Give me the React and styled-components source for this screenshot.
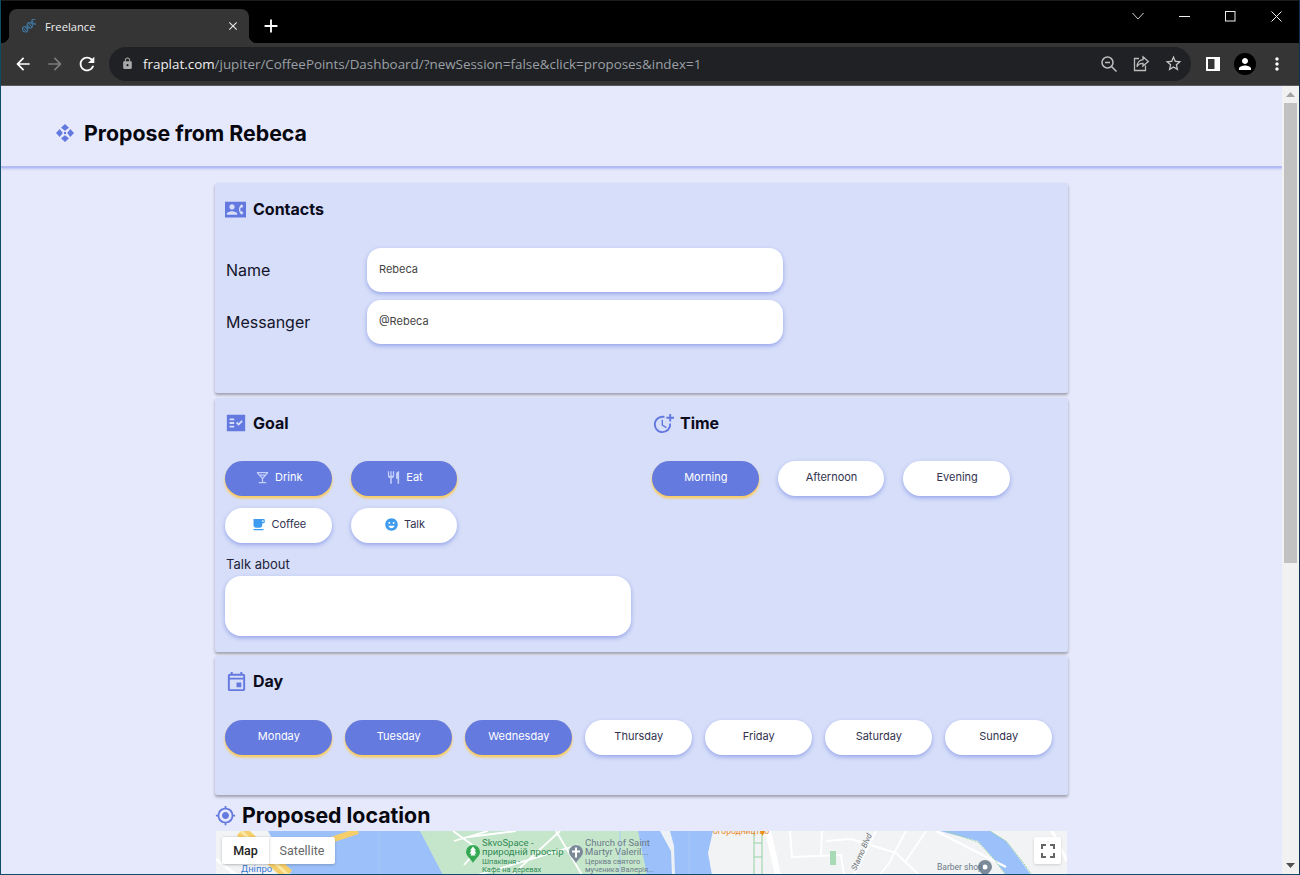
import React from "react";
import styled, { createGlobalStyle } from "styled-components";
import {
  MdOutlineMoreTime, MdOutlineEvent, MdOutlineLocalBar,
  MdRestaurant, MdLocalCafe, MdEmojiEmotions, MdGpsFixed,
  MdArrowBack, MdArrowForward, MdRefresh, MdLock, MdStarBorder, MdPerson, MdMoreVert, MdClose, MdAdd,
} from "react-icons/md";

const Global = createGlobalStyle`
  html, body { margin: 0; padding: 0; height: 875px; overflow: hidden; }
  * { box-sizing: border-box; }
  body { font-family: Inter, "Noto Sans", sans-serif; background: #000; }
`;

const Win = styled.div`
  width: 1300px; height: 875px; display: flex; flex-direction: column; overflow: hidden;
  border-left: 1px solid #0f4a66; border-right: 1px solid #12304f; border-bottom: 1px solid #0f4a66;
  background: #e6e9fb;
`;
const TabStrip = styled.div`
  height: 43px; background: #000; display: flex; align-items: flex-end; padding-left: 8px; flex: none;
  border-top: 1px solid #1c1c1c; position: relative;
`;
const Tab = styled.div`
  width: 240px; height: 34px; background: #353535; border-radius: 8px 8px 0 0; display: flex; align-items: center;
  padding: 0 9px 0 13px; position: relative; color: #f0f0f0;
  font: 11.2px "Open Sans", "Noto Sans", sans-serif;
  &::before, &::after { content: ""; position: absolute; bottom: 0; width: 8px; height: 8px; }
  &::before { left: -8px; background: radial-gradient(circle at 0 0, transparent 8px, #353535 8.5px); }
  &::after { right: -8px; background: radial-gradient(circle at 100% 0, transparent 8px, #353535 8.5px); }
`;
const TabTitle = styled.span` margin-left: 9px; flex: 1; `;
const NewTab = styled.div` width: 32px; height: 34px; margin-left: 6px; display: flex; align-items: center; justify-content: center; color: #fff; `;
const WinControls = styled.div` margin-left: auto; align-self: flex-start; display: flex; `;
const WinBtn = styled.div` width: 46px; height: 30px; display: flex; align-items: center; justify-content: center; color: #e6e6e6; `;

const Toolbar = styled.div`
  height: 43px; flex: none; background: #353535; border-bottom: 1px solid #5a5a5a; display: flex; align-items: center; padding: 0 6px 1px;
`;
const ToolBtn = styled.div`
  width: 32px; height: 32px; display: flex; align-items: center; justify-content: center; flex: none;
  color: ${p => p.$dim ? "#7c7c7c" : "#fff"};
`;
const Address = styled.div`
  width: 1082px; height: 34px; margin: 0 6px; border-radius: 17px; background: #202124; display: flex; align-items: center;
  padding: 0 2px 0 11px; flex: none;
`;
const LockBox = styled.div` width: 14px; color: #a8a8a8; display: flex; justify-content: center; margin-right: 9px; `;
const Url = styled.div` flex: 1; font: 13.4px "Open Sans", "Noto Sans", sans-serif; color: #9aa0a6; white-space: nowrap; `;
const Host = styled.span` color: #f0f0f0; `;
const AddrBtn = styled.div` width: 32px; height: 32px; color: #c4c7c5; display: flex; align-items: center; justify-content: center; `;
const Avatar = styled.div` width: 22px; height: 22px; border-radius: 50%; background: #000; color: #fff; display: flex; align-items: center; justify-content: center; `;

const Viewport = styled.div` flex: 1; min-height: 0; display: flex; `;
const Main = styled.main` flex: 1; min-width: 0; overflow: hidden; background: #e6e9fb; `;
const Header = styled.header`
  height: 82px; display: flex; align-items: center; gap: 9px; padding: 14px 0 0 54px;
  border-bottom: 2px solid #b3bcf3; box-shadow: 0 1px 2px rgba(150,165,235,.6);
`;
const PageTitle = styled.h1` margin: 0; font-size: 21.3px; line-height: 26px; font-weight: 700; color: #07070f; `;
const Stack = styled.div` width: 853px; margin: 15px auto 0; display: flex; flex-direction: column; `;
const Card = styled.section`
  background: #d6def9; border-radius: 2px; box-shadow: 0 2px 3px rgba(0,0,0,.32); padding: ${p => p.$pt}px 10px 0;
  height: ${p => p.$h}px; margin-top: ${p => p.$mt || 0}px;
`;
const TitleRow = styled.div` height: 24px; display: flex; align-items: center; gap: 5px; margin-left: -1px; color: #6479df; `;
const IconSlot = styled.span` width: 24px; display: flex; align-items: center; justify-content: center; flex: none; `;
const CardTitle = styled.h2` margin: 0; font-size: 16px; line-height: 24px; font-weight: 700; color: #0b0b1c; `;
const Fields = styled.div` margin-top: 27px; display: flex; flex-direction: column; gap: 8px; `;
const Row = styled.div` display: flex; align-items: center; `;
const FieldLabel = styled.label` width: 142px; padding-left: 1px; font-size: 16px; color: #14142a; `;
const Input = styled.input`
  width: 416px; height: 44px; border: 0; outline: 0; background: #fff; border-radius: 14px; padding: 0 12px 2px;
  font: 11px Inter, sans-serif; color: #444; box-shadow: 0 2px 4px rgba(100,120,222,.55);
`;
const Columns = styled.div` display: grid; grid-template-columns: 406px 406px; column-gap: 21px; `;
const Chips = styled.div`
  display: flex; flex-wrap: wrap; gap: 12px ${p => p.$gap}px; margin-top: ${p => p.$mt}px;
  max-width: ${p => p.$max ? `${p.$max}px` : "none"};
`;
const Chip = styled.button`
  width: 106.67px; height: 35px; border: 0; border-radius: 18px; display: flex; align-items: center; justify-content: center; gap: 5px;
  padding: 0 0 3px 1px; font: 11px Inter, sans-serif;
  background: ${p => p.$on ? "#647adf" : "#fff"};
  color: ${p => p.$on ? "#fff" : "#33334f"};
  box-shadow: ${p => p.$on ? "0 2px 2px .5px #f9cd68" : "0 2px 4px rgba(100,120,222,.55)"};
  svg { color: ${p => p.$on ? "#c3d0fb" : "#3f9bef"}; flex: none; }
`;
const SmallLabel = styled.div` margin-top: 13px; font-size: 13px; line-height: 16px; color: #23233a; padding-left: 1px; `;
const TextArea = styled.div`
  margin-top: 4px; height: 60px; background: #fff; border-radius: 16px; box-shadow: 0 2px 4px rgba(100,120,222,.55);
`;
const MapSection = styled.div` width: 851px; margin: 7px auto 0; `;
const MapHead = styled.div` height: 26px; display: flex; align-items: center; gap: 6px; color: #6479df; margin-left: -1px; `;
const MapTitle = styled.h2` margin: 0; font-size: 21.3px; line-height: 26px; font-weight: 700; color: #07070f; `;
const MapBox = styled.div` position: relative; height: 300px; margin-top: 3px; background: #9cc0f9; `;
const MapType = styled.div`
  position: absolute; left: 6px; top: 6px; height: 27px; width: 113px; display: flex; background: #fff; border-radius: 2px;
  box-shadow: 0 1px 3px rgba(0,0,0,.2); font: 12.5px Roboto, sans-serif;
`;
const MapTab = styled.div`
  display: flex; align-items: center; justify-content: center; width: ${p => p.$w}px;
  color: ${p => p.$on ? "#222" : "#666"}; font-weight: ${p => p.$on ? 500 : 400};
  box-shadow: ${p => p.$on ? "1px 0 2px rgba(0,0,0,.12)" : "none"};
`;
const FullBtn = styled.div`
  position: absolute; right: 6px; top: 6px; width: 27px; height: 27px; background: #fff; border-radius: 2px;
  display: flex; align-items: center; justify-content: center; box-shadow: 0 1px 3px rgba(0,0,0,.15);
`;
const MapSvg = styled.svg` display: block; `;
const ScrollBar = styled.div`
  width: 17px; flex: none; background: #f1f1f1; display: flex; flex-direction: column; align-items: center;
`;
const ArrowBox = styled.div` height: 17px; display: flex; align-items: center; justify-content: center; flex: none; `;
const Thumb = styled.div` width: 13px; height: 460px; background: #c1c1c1; flex: none; `;
const Spacer = styled.div` flex: 1; `;
const ContactsSvg = styled.svg` margin-left: -1px; `;

const Favicon = () => (
  <svg width="14" height="14" viewBox="0 0 14 14" fill="none" stroke="#3f78a3">
    <g transform="rotate(-40 7 7)">
      <path d="M-1 7C1 3 3 3 5 7S9 11 11 7 14 4 16 6" strokeWidth="1.1" />
      <path d="M-1 7C1 11 3 11 5 7S9 3 11 7 14 10 16 8" strokeWidth="1.1" />
      <path d="M1.500 4.500v5M3.500 4.500v5M6.500 4.500v5M8.500 4.500v5M12.500 5v4" strokeWidth=".9" />
    </g>
  </svg>
);

const ZoomOutIcon = () => (
  <svg width="18" height="18" viewBox="0 0 18 18" fill="none" stroke="#bdbdbd" strokeWidth="1.500">
    <circle cx="7.500" cy="7.500" r="5.500" />
    <path d="M11.500 11.500L16.500 16.500M5 7.500h5" />
  </svg>
);

const ShareIcon = () => (
  <svg width="18" height="18" viewBox="0 0 18 18" fill="none" stroke="#bdbdbd" strokeWidth="1.300">
    <path d="M7 3.500H2.500v12h11v-5" />
    <path d="M11 1.800L16.300 6.400 11 11V8.300C8 8.200 6 9.500 5 11.800 5 8 7.400 5 11 4.600Z" />
  </svg>
);

const SidePanel = () => (
  <svg width="14" height="14" viewBox="0 0 14 14">
    <path fill="#fff" fillRule="evenodd" d="M0 0h14v14H0zM2 2v10h6.500V2z" />
  </svg>
);

const ControlIcon = () => (
  <svg width="20" height="20" viewBox="0 0 20 20" fill="#6479df">
    <path d="M10 1l4 3.700L10 7.800 6 4.700zM10 19l4-3.700-4-3.100-4 3.100zM1 10l3.700-4 3.100 4-3.100 4zM19 10l-3.700-4-3.100 4 3.100 4z" />
    <circle cx="10" cy="10" r="1.200" />
  </svg>
);

const ContactsIcon = () => (
  <ContactsSvg width="21" height="21" viewBox="0 0 24 24" fill="currentColor">
    <path fillRule="evenodd" d="M0 3h24v18H0zM8 6c1.660 0 3 1.340 3 3s-1.340 3-3 3-3-1.340-3-3 1.340-3 3-3zm6 12H2v-1c0-2 4-3.100 6-3.100s6 1.100 6 3.100v1zm3.850-4h1.640L21 16l-1.990 1.990c-1.310-.98-2.280-2.380-2.730-3.990-.18-.64-.28-1.310-.28-2s.1-1.360.28-2c.45-1.620 1.420-3.010 2.730-3.990L21 8l-1.510 2h-1.640c-.22.63-.35 1.300-.35 2s.13 1.370.35 2z" />
  </ContactsSvg>
);

const GoalIcon = () => (
  <svg width="22" height="22" viewBox="0 0 24 24" fill="currentColor">
    <path fillRule="evenodd" d="M2 3h20v18H2zM10 17H5v-2h5v2zm0-4H5v-2h5v2zm0-4H5V7h5v2zm4.820 6L12 12.160l1.410-1.410 1.410 1.420L17.990 9l1.420 1.420L14.820 15z" />
  </svg>
);

const MapArt = () => (
  <MapSvg width="851" height="300" viewBox="0 0 851 300">
    <rect width="851" height="300" fill="#9cc0f9" />
    <path d="M0 0H52L75 44H0Z" fill="#f1f3f4" />
    <path d="M25 0L72 44" stroke="#f6cf6a" strokeWidth="12" />
    <path d="M25 0L72 44" stroke="#fbe7a6" strokeWidth="3" />
    <path d="M0 28L20 44" stroke="#fff" strokeWidth="3" />
    <path d="M100 14L142 0" stroke="#f6cf6a" strokeWidth="6" />
    <path d="M163 0V44" stroke="#aac9f9" strokeWidth="1" />
    <path d="M204 0H422L431 44H227Z" fill="#c6e6cc" />
    <path d="M237 0L262 18 248 34M238 10L272 0M252 6L300 0M340 0L366 44M344 0L296 44M262 44L362 14" fill="none" stroke="#fff" strokeWidth="1.800" />
    <path d="M444 0H454L458 15 459 44H456L455 20Z" fill="#eef1f5" />
    <path d="M404 0V44M473 0V44" stroke="#aac9f9" strokeWidth="1" />
    <path d="M497 0L492 22 496 44H851V0H774L790 10 805 30 815 44H790L778 28 762 10 724 0Z" fill="#f1f3f4" />
    <path d="M538 0V44M546 0V44" stroke="#96d1a4" strokeWidth="1" />
    <path d="M538 12H546M538 26H546" stroke="#96d1a4" strokeWidth="1" />
    <path d="M552 0L562 44" stroke="#fff" strokeWidth="6" />
    <path d="M574 0L576 26 625 24 628 44M606 0L605 24" fill="none" stroke="#fff" strokeWidth="2" />
    <path d="M610 10L635 8 680 22 703 44M638 44L660 0M720 0L790 36M690 0L675 28M710 0L690 30M664 44L676 28" fill="none" stroke="#fff" strokeWidth="2" />
    <path d="M730 0L762 11 778 28 790 44" fill="none" stroke="#96d1a4" strokeWidth="1" strokeDasharray="2 1" />
    <path d="M774 0L791 11 806 30 816 44" fill="none" stroke="#96d1a4" strokeWidth="1" strokeDasharray="2 1" />
    <path d="M836 0L851 30" stroke="#fff" strokeWidth="3" />
    <rect x="614" y="20" width="6" height="14" fill="#a8dab5" />
    <path d="M257 14a7 7 0 0 1 7 7c0 4-5 7-7 11-2-4-7-7-7-11a7 7 0 0 1 7-7z" fill="#34a853" />
    <path d="M257 15.500l3 4h-1.500l2 3h-2l1 2h-5l1-2h-2l2-3H254z" fill="#fff" />
    <path d="M360 14a7 7 0 0 1 7 7c0 4-5 7-7 11-2-4-7-7-7-11a7 7 0 0 1 7-7z" fill="#7b8a99" />
    <path d="M359 16.500h2v3h3v2h-3v5h-2v-5h-3v-2h3z" fill="#fff" />
    <path d="M769 29a7 7 0 0 1 7 7c0 4-5 7-7 11-2-4-7-7-7-11a7 7 0 0 1 7-7z" fill="#7b8a99" />
    <circle cx="769" cy="36" r="2.500" fill="#fff" />
    <path d="M544 0h5l-2.500 5z" fill="#f29900" />
    <g fontFamily="Roboto, sans-serif" fontSize="9.500">
      <text x="266" y="15" fill="#2f8a52">SkvoSpace -</text>
      <text x="266" y="24" fill="#2f8a52">природній простір</text>
      <text x="266" y="33" fill="#2f8a52" fontSize="7.500">Шпаківня -</text>
      <text x="266" y="41" fill="#2f8a52" fontSize="7.500">Кафе на деревах</text>
      <text x="369" y="15" fill="#6a7a88">Church of Saint</text>
      <text x="369" y="24" fill="#6a7a88">Martyr Valeril...</text>
      <text x="369" y="33" fill="#6a7a88" fontSize="7.500">Церква святого</text>
      <text x="369" y="41" fill="#6a7a88" fontSize="7.500">мученика Валерія...</text>
      <text x="497" y="3" fill="#e88a2a" fontSize="8.500">огородництво</text>
      <text x="721" y="39" fill="#6a7a88" fontSize="8.500">Barber shop</text>
      <text x="25" y="41" fill="#3a78d4">Дніпро</text>
      <text transform="translate(640 40) rotate(-66)" fill="#6a6f75" fontSize="8" fontStyle="italic">Stamo Blvd</text>
    </g>
  </MapSvg>
);

const goal = [
  { t: "Drink", on: true, i: <MdOutlineLocalBar size={15} /> },
  { t: "Eat", on: true, i: <MdRestaurant size={15} /> },
  { t: "Coffee", i: <MdLocalCafe size={15} /> },
  { t: "Talk", i: <MdEmojiEmotions size={15} /> },
];
const times = [{ t: "Morning", on: true }, { t: "Afternoon" }, { t: "Evening" }];
const days = [
  { t: "Monday", on: true }, { t: "Tuesday", on: true }, { t: "Wednesday", on: true },
  { t: "Thursday" }, { t: "Friday" }, { t: "Saturday" }, { t: "Sunday" },
];

export default function App() {
  return (
    <>
      <Global />
      <Win>
        <TabStrip>
          <Tab>
            <Favicon />
            <TabTitle>Freelance</TabTitle>
            <MdClose size={14} color="#e6e6e6" />
          </Tab>
          <NewTab><MdAdd size={22} /></NewTab>
          <WinControls>
            <WinBtn>
              <svg width="12" height="8" viewBox="0 0 12 8" fill="none" stroke="#ccc"><path d="M.5 1L6 7l5.500-6" /></svg>
            </WinBtn>
            <WinBtn>
              <svg width="11" height="11" viewBox="0 0 11 11" stroke="#eee"><path d="M0 5.500h11" /></svg>
            </WinBtn>
            <WinBtn>
              <svg width="11" height="11" viewBox="0 0 11 11" fill="none" stroke="#eee"><rect x=".5" y=".5" width="9.500" height="9.500" /></svg>
            </WinBtn>
            <WinBtn>
              <svg width="11" height="11" viewBox="0 0 11 11" stroke="#eee"><path d="M.5.500l10 10M10.500.500l-10 10" /></svg>
            </WinBtn>
          </WinControls>
        </TabStrip>
        <Toolbar>
          <ToolBtn><MdArrowBack size={20} /></ToolBtn>
          <ToolBtn $dim><MdArrowForward size={20} /></ToolBtn>
          <ToolBtn><MdRefresh size={22} /></ToolBtn>
          <Address>
            <LockBox><MdLock size={13} /></LockBox>
            <Url><Host>fraplat.com</Host>/jupiter/CoffeePoints/Dashboard/?newSession=false&amp;click=proposes&amp;index=1</Url>
            <AddrBtn><ZoomOutIcon /></AddrBtn>
            <AddrBtn><ShareIcon /></AddrBtn>
            <AddrBtn><MdStarBorder size={19} /></AddrBtn>
          </Address>
          <ToolBtn><SidePanel /></ToolBtn>
          <ToolBtn><Avatar><MdPerson size={18} /></Avatar></ToolBtn>
          <ToolBtn><MdMoreVert size={20} /></ToolBtn>
        </Toolbar>
        <Viewport>
          <Main>
            <Header>
              <ControlIcon />
              <PageTitle>Propose from Rebeca</PageTitle>
            </Header>
            <Stack>
              <Card $h={210} $pt={14}>
                <TitleRow>
                  <IconSlot><ContactsIcon /></IconSlot>
                  <CardTitle>Contacts</CardTitle>
                </TitleRow>
                <Fields>
                  <Row>
                    <FieldLabel>Name</FieldLabel>
                    <Input readOnly value="Rebeca" />
                  </Row>
                  <Row>
                    <FieldLabel>Messanger</FieldLabel>
                    <Input readOnly value="@Rebeca" />
                  </Row>
                </Fields>
              </Card>
              <Card $h={254} $pt={13} $mt={5}>
                <Columns>
                  <div>
                    <TitleRow>
                      <IconSlot><GoalIcon /></IconSlot>
                      <CardTitle>Goal</CardTitle>
                    </TitleRow>
                    <Chips $gap={19} $mt={26} $max={240}>
                      {goal.map(g => <Chip key={g.t} $on={g.on}>{g.i}{g.t}</Chip>)}
                    </Chips>
                    <SmallLabel>Talk about</SmallLabel>
                    <TextArea />
                  </div>
                  <div>
                    <TitleRow>
                      <IconSlot><MdOutlineMoreTime size={23} /></IconSlot>
                      <CardTitle>Time</CardTitle>
                    </TitleRow>
                    <Chips $gap={19} $mt={26}>
                      {times.map(g => <Chip key={g.t} $on={g.on}>{g.t}</Chip>)}
                    </Chips>
                  </div>
                </Columns>
              </Card>
              <Card $h={139} $pt={13} $mt={4}>
                <TitleRow>
                  <IconSlot><MdOutlineEvent size={23} /></IconSlot>
                  <CardTitle>Day</CardTitle>
                </TitleRow>
                <Chips $gap={13.33} $mt={27}>
                  {days.map(g => <Chip key={g.t} $on={g.on}>{g.t}</Chip>)}
                </Chips>
              </Card>
            </Stack>
            <MapSection>
              <MapHead>
                <MdGpsFixed size={21} />
                <MapTitle>Proposed location</MapTitle>
              </MapHead>
              <MapBox>
                <MapArt />
                <MapType>
                  <MapTab $on $w={47}>Map</MapTab>
                  <MapTab $w={66}>Satellite</MapTab>
                </MapType>
                <FullBtn>
                  <svg width="14" height="14" viewBox="0 0 14 14" fill="none" stroke="#666" strokeWidth="2">
                    <path d="M1 5V1h4M9 1h4v4M13 9v4H9M5 13H1V9" />
                  </svg>
                </FullBtn>
              </MapBox>
            </MapSection>
          </Main>
          <ScrollBar>
            <ArrowBox>
              <svg width="9" height="5" viewBox="0 0 9 5" fill="#a3a3a3"><path d="M4.500 0L9 5H0z" /></svg>
            </ArrowBox>
            <Thumb />
            <Spacer />
            <ArrowBox>
              <svg width="9" height="5" viewBox="0 0 9 5" fill="#505050"><path d="M0 0h9L4.500 5z" /></svg>
            </ArrowBox>
          </ScrollBar>
        </Viewport>
      </Win>
    </>
  );
}
